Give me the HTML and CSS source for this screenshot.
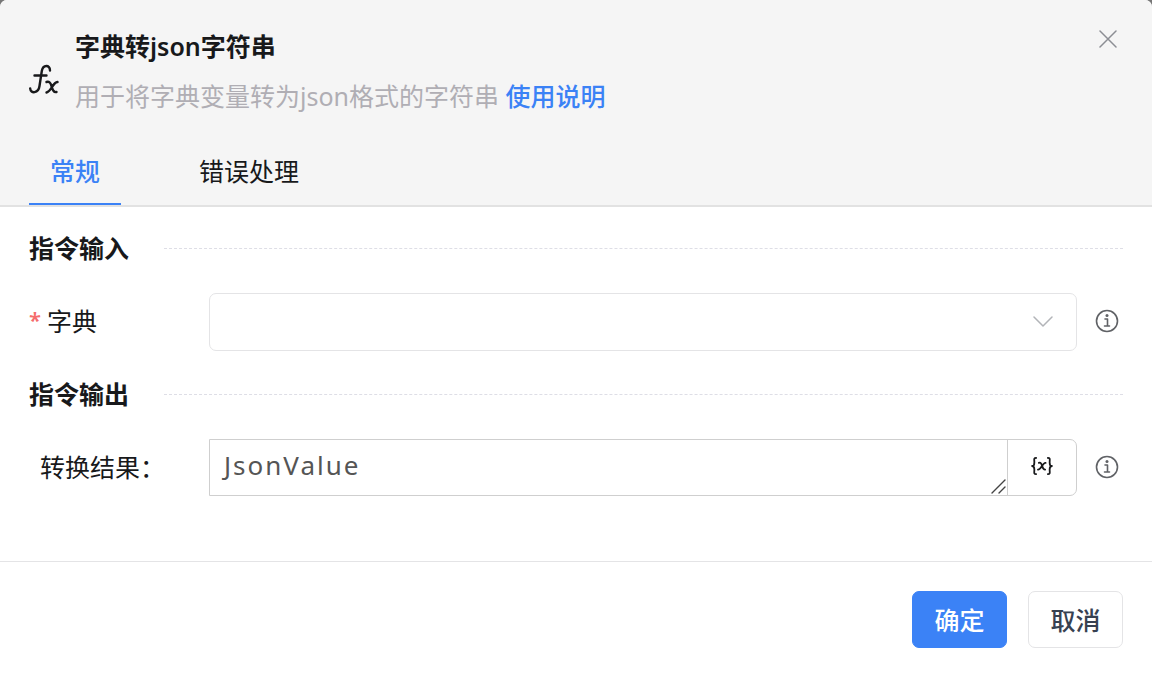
FILE: index.html
```html
<!DOCTYPE html>
<html lang="zh-CN">
<head>
<meta charset="utf-8">
<meta name="viewport" content="width=device-width, initial-scale=1">
<title>字典转json字符串</title>
<link rel="stylesheet" href="styles.css">
</head>
<body>
<main class="dialog">
  <header class="header">
    <div class="intro">
      <svg class="fx" viewBox="0 0 30 32" aria-hidden="true"><path d="M21 6.5C21 .5 14 .5 12.800 7L10.500 22C9.500 29.500 1.500 30 1.200 24.500M5.500 11.500h12"/><path d="M17.500 18c3-1 4 1 5 4s2 7 5 6M28.500 18c-5 .5-6 9.500-11 10.500"/></svg>
      <div class="intro-text">
        <h1 class="title">字典转json字符串</h1>
        <p class="subtitle">用于将字典变量转为json格式的字符串 <a class="help" href="#help">使用说明</a></p>
      </div>
      <button class="close" type="button" aria-label="关闭"><svg viewBox="0 0 18 18"><path d="M1 1l16 16M17 1L1 17"/></svg></button>
    </div>
    <nav class="tabs">
      <button class="tab tab-active" type="button">常规</button>
      <button class="tab" type="button">错误处理</button>
    </nav>
  </header>
  <form class="form">
    <h2 class="section">指令输入</h2>
    <div class="row">
      <label class="label" for="dict"><span class="required">*</span>字典</label>
      <div class="select-wrap">
        <select class="select" id="dict"><option></option></select>
        <svg class="chevron" viewBox="0 0 20 12" aria-hidden="true"><path d="M1 1l9 9 9-9"/></svg>
      </div>
      <button class="info" type="button" aria-label="字典说明"><svg viewBox="0 0 24 24"><circle cx="12" cy="12" r="10.5"/><path d="M10 10h2.500v7M9.500 17h5"/><circle class="dot" cx="12" cy="6.5" r="1.5"/></svg></button>
    </div>
    <h2 class="section">指令输出</h2>
    <div class="row">
      <label class="label label-inset" for="result">转换结果：</label>
      <div class="group">
        <div class="area-wrap">
          <textarea class="area" id="result" rows="1" spellcheck="false">JsonValue</textarea>
          <svg class="grip" viewBox="0 0 16 16" aria-hidden="true"><path d="M1 14L14 1M8 14l6-6"/></svg>
        </div>
        <button class="variable" type="button" aria-label="选择变量"><svg viewBox="0 0 24 20"><path d="M5.500 1C2.500 1 3.500 3 3.500 6S3 10 1 10c2 0 2.500 1 2.500 4s-1 5 2 5M18.500 1c3 0 2 2 2 5s.5 4 2.500 4c-2 0-2.500 1-2.500 4s1 5-2 5M8.500 6.500c4-2 3 8 7 7.500M16 6.500c-3-1-5 8-8.500 7.500"/></svg></button>
      </div>
      <button class="info" type="button" aria-label="转换结果说明"><svg viewBox="0 0 24 24"><circle cx="12" cy="12" r="10.5"/><path d="M10 10h2.500v7M9.500 17h5"/><circle class="dot" cx="12" cy="6.5" r="1.5"/></svg></button>
    </div>
  </form>
  <footer class="footer">
    <button class="button button-primary" type="button">确定</button>
    <button class="button" type="button">取消</button>
  </footer>
</main>
</body>
</html>
```

FILE: styles.css
```css
* { box-sizing: border-box; }
body {
  margin: 0;
  background: #777;
  color: #18191b;
  font: 25px/32px "Noto Sans", "Noto Sans CJK SC", sans-serif;
}
button, select, textarea { font: inherit; color: inherit; margin: 0; }
button { padding: 0; border: 0; background: none; cursor: pointer; }
svg { display: block; fill: none; stroke: currentColor; stroke-linecap: round; stroke-linejoin: round; }
.dialog {
  display: flex;
  flex-direction: column;
  min-height: 100vh;
  background: #fff;
  border-radius: 7px 7px 0 0;
}
.header {
  padding: 30px 29px 0;
  background: #f5f5f5;
  border-bottom: 2px solid #e2e2e2;
  border-radius: 7px 7px 0 0;
}
.intro { display: flex; align-items: flex-start; }
.fx { flex: none; width: 30px; height: 32px; margin: 34px 16px 0 0; stroke-width: 2.4; }
.intro-text { flex: 1; }
.title { margin: 0 0 18px; font-size: 25px; font-weight: 600; line-height: 32px; }
.subtitle { margin: 0; color: #b0aeb4; }
.help { color: #3b82f6; font-weight: 500; text-decoration: none; }
.close { padding: 0 6px; color: #8c8e94; }
.close svg { width: 18px; height: 18px; stroke-width: 1.5; }
.tabs { display: flex; gap: 57px; margin-top: 26px; }
.tab { height: 67px; padding: 0 21px; border-bottom: 2px solid transparent; }
.tab-active { color: #3b82f6; border-bottom-color: #3b82f6; font-weight: 500; }
.form { flex: 1; padding: 25px 29px 0; }
.section {
  display: flex;
  align-items: center;
  gap: 35px;
  margin: 0 0 29px;
  font-size: 25px;
  font-weight: 700;
  line-height: 32px;
}
.section::after { content: ""; flex: 1; border-top: 1px dashed #dedee6; }
.row { display: flex; align-items: center; margin-bottom: 27px; }
.label { display: flex; width: 180px; padding-bottom: 2px; }
.label-inset { padding-left: 11px; }
.required { width: 18px; color: #f56c6c; font-size: 22px; font-weight: 600; line-height: 28px; }
.select-wrap { position: relative; flex: 1; }
.select {
  display: block;
  width: 100%;
  height: 58px;
  padding: 0 56px 0 14px;
  appearance: none;
  border: 1px solid #e4e4e6;
  border-radius: 7px;
  background: #fff;
}
.chevron { position: absolute; top: 23px; right: 24px; width: 20px; height: 12px; color: #b2b4b8; stroke-width: 1.5; pointer-events: none; }
.info { margin: 0 4px 0 18px; padding-bottom: 2px; color: #606266; }
.info svg { width: 24px; height: 24px; stroke-width: 1.6; }
.info .dot { fill: currentColor; stroke: none; }
.group { display: flex; flex: 1; height: 57px; border: 1px solid #cfcfcf; border-radius: 0 7px 7px 0; }
.area-wrap { position: relative; flex: 1; }
.area {
  display: block;
  width: 100%;
  height: 55px;
  padding: 9px 14px;
  border: 0;
  background: transparent;
  color: #555;
  font-size: 26px;
  letter-spacing: 2px;
  resize: none;
  overflow: hidden;
}
.grip { position: absolute; right: 0; bottom: 0; width: 16px; height: 16px; color: #444; stroke-width: 1.4; }
.variable { display: grid; place-items: center; width: 69px; padding-bottom: 4px; border-left: 1px solid #cfcfcf; }
.variable svg { width: 24px; height: 18px; stroke-width: 2; }
.footer { display: flex; justify-content: flex-end; gap: 21px; padding: 29px 29px 28px; border-top: 1px solid #e4e4e6; }
.button { width: 95px; height: 57px; border: 1px solid #e4e4e6; border-radius: 7px; background: #fff; color: #374151; font-weight: 500; }
.button-primary { border-color: #3b82f6; background: #3b82f6; color: #fff; }
```
